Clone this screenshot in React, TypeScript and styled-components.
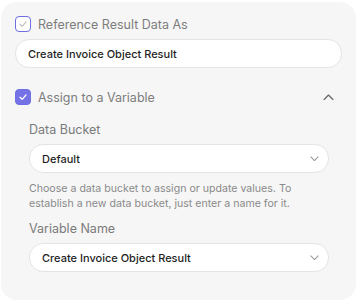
import React from 'react';
import styled, { createGlobalStyle } from 'styled-components';

const GlobalStyle = createGlobalStyle`
  html, body {
    margin: 0;
    padding: 0;
    background: #ffffff;
    font-family: Inter, "Noto Sans", sans-serif;
  }
`;

const Page = styled.div`
  width: 360px;
  height: 304px;
  padding: 2px 4px 4px 1px;
  box-sizing: border-box;
`;

const Card = styled.div`
  background: #f6f6f6;
  border-radius: 16px;
  height: 298px;
  box-sizing: border-box;
  padding: 14px 14px 0 14px;
  display: flex;
  flex-direction: column;
`;

const CheckRow = styled.div<{ $mt?: number }>`
  display: flex;
  align-items: center;
  gap: 7px;
  height: 16px;
  margin-top: ${(p) => p.$mt ?? 0}px;
`;

const Box = styled.span<{ $checked?: boolean }>`
  width: 16px;
  height: 16px;
  box-sizing: border-box;
  border-radius: 4px;
  border: 1px solid #6f6ee3;
  background: ${(p) => (p.$checked ? '#7472e4' : '#ffffff')};
  display: flex;
  align-items: center;
  justify-content: center;
  flex: none;
`;

const CheckLabel = styled.span`
  font-size: 12.5px;
  color: #7d7d7d;
  flex: 1;
`;

const Toggle = styled.span`
  display: flex;
  margin-right: 8px;
`;

const Field = styled.div<{ $mt?: number; $select?: boolean }>`
  margin-top: ${(p) => p.$mt ?? 0}px;
  height: 29px;
  box-sizing: border-box;
  background: #ffffff;
  border: 1px solid #e4e4e4;
  border-radius: 14px;
  display: flex;
  align-items: center;
  padding: 0 ${(p) => (p.$select ? 9 : 12)}px 0 12px;
  font-size: 11px;
  font-weight: 500;
  color: #1f1f1f;
  justify-content: space-between;
`;

const Section = styled.div`
  padding: 0 13px 0 14px;
  display: flex;
  flex-direction: column;
`;

const Label = styled.div<{ $mt: number }>`
  margin-top: ${(p) => p.$mt}px;
  font-size: 12.5px;
  color: #7a7a7a;
  height: 16px;
  line-height: 16px;
  margin-bottom: 6px;
`;

const Help = styled.p`
  margin: 8px 0 0 0;
  font-size: 10.6px;
  line-height: 15px;
  color: #8a8a8a;
`;

const Check = ({ color }: { color: string }) => (
  <svg width="10" height="10" viewBox="0 0 10 10" fill="none">
    <path d="M2 5.2 L4.2 7.3 L8 3" stroke={color} strokeWidth="1.2" strokeLinecap="round" strokeLinejoin="round" />
  </svg>
);

const Chevron = ({ up, color, w }: { up?: boolean; color: string; w: number }) => (
  <svg width={w} height={w / 2 + 1} viewBox="0 0 10 6" fill="none">
    <path d={up ? 'M1 5 L5 1 L9 5' : 'M1 1 L5 5 L9 1'} stroke={color} strokeWidth="1.2" strokeLinecap="round" strokeLinejoin="round" />
  </svg>
);

export default function App() {
  return (
    <>
      <GlobalStyle />
      <Page>
        <Card>
          <CheckRow>
            <Box>
              <Check color="#c4c4c4" />
            </Box>
            <CheckLabel>Reference Result Data As</CheckLabel>
          </CheckRow>
          <Field $mt={7}>Create Invoice Object Result</Field>
          <CheckRow $mt={21}>
            <Box $checked>
              <Check color="#ffffff" />
            </Box>
            <CheckLabel>Assign to a Variable</CheckLabel>
            <Toggle>
              <Chevron up color="#6a6a6a" w={11} />
            </Toggle>
          </CheckRow>
          <Section>
            <Label $mt={17}>Data Bucket</Label>
            <Field $select>
              Default
              <Chevron color="#9a9a9a" w={9} />
            </Field>
            <Help>
              Choose a data bucket to assign or update values. To establish a new data bucket, just enter a name for it.
            </Help>
            <Label $mt={10}>Variable Name</Label>
            <Field $select>
              Create Invoice Object Result
              <Chevron color="#9a9a9a" w={9} />
            </Field>
          </Section>
        </Card>
      </Page>
    </>
  );
}
